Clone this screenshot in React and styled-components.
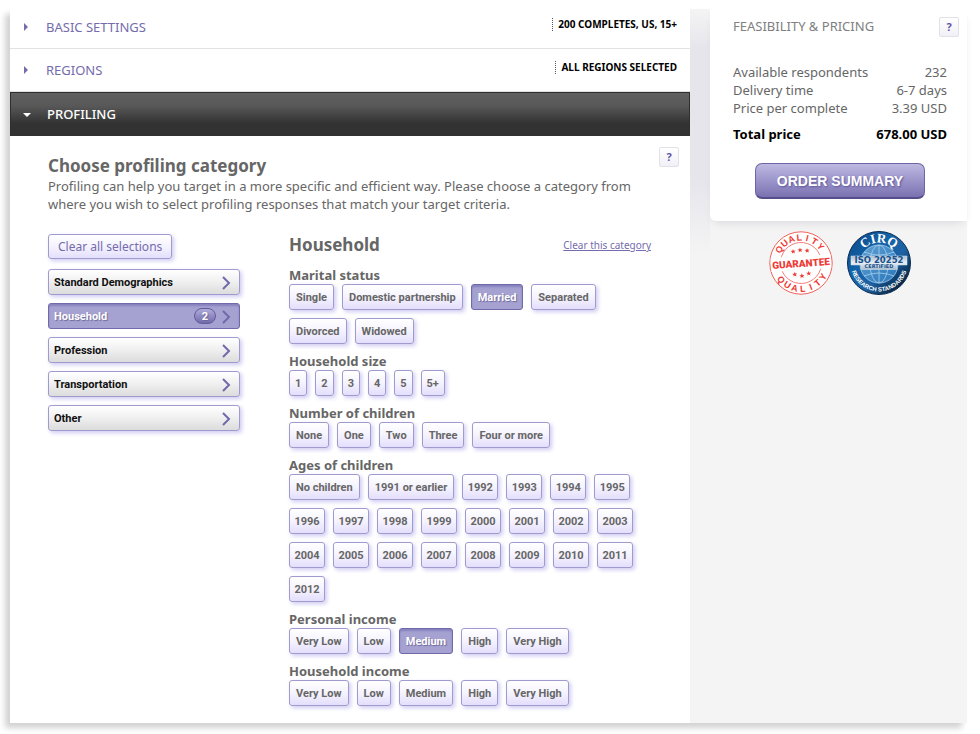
import React, { useState } from 'react';
import styled, { createGlobalStyle, css } from 'styled-components';

const GlobalStyle = createGlobalStyle`
  * { box-sizing: border-box; }
  body {
    margin: 0;
    background: #fff;
    color: #666;
    font: 13px/18px "Noto Sans", "Open Sans", sans-serif;
  }
  h1, h2, h3, p, dl, dd, ul { margin: 0; padding: 0; }
  button { font-family: inherit; cursor: pointer; }
`;

const Page = styled.div`
  display: flex;
  margin: 9px 13px 11px 10px;
  background: #f4f4f4;
  box-shadow: -5px 5px 6px #d2d2d2;
`;

const Main = styled.main`
  flex: 1;
  min-width: 0;
  background: #fff;
`;

const Arrow = styled.svg`
  width: 8px;
  height: 8px;
  margin-right: 14px;
  fill: currentColor;
`;

const SectionButton = styled.button`
  display: flex;
  align-items: center;
  width: 100%;
  height: 43px;
  padding: 0 13px 0 14px;
  border: 0;
  border-bottom: 1px solid #e2e2e2;
  background: #fff;
  color: #746cac;
  font-size: 13px;
  line-height: 18px;
  text-align: left;

  ${(p) => p.$first && css`
    height: 40px;
    padding-bottom: 3px;
  `}

  ${(p) => p.$open && css`
    height: 44px;
    border: 1px solid #2f2f2f;
    border-bottom: 0;
    padding: 0 12px 2px;
    background: linear-gradient(#606060, #585858 30%, #333 70%, #313131);
    color: #fff;
    font-weight: 500;

    ${Arrow} { margin-right: 16px; }
  `}
`;

const SectionName = styled.span`
  flex: 1;
`;

const Summary = styled.span`
  padding-left: 5px;
  margin-bottom: 5px;
  border-left: 1px dotted #555;
  color: #000;
  font-size: 10px;
  font-weight: 700;
  line-height: 13px;
`;

const Content = styled.div`
  padding: 11px 11px 17px 38px;
`;

const Intro = styled.header`
  display: flex;
  align-items: flex-start;
  gap: 8px;
  margin-bottom: 21px;
`;

const IntroText = styled.div`
  flex: 1;
  padding-top: 8px;
`;

const Title = styled.h2`
  color: #666;
  font-size: 17px;
  font-weight: 700;
  line-height: 22px;
`;

const HelpButton = styled.button`
  flex: none;
  width: 20px;
  height: 20px;
  padding: 0;
  border: 1px solid #e2e2e6;
  border-radius: 2px;
  background: linear-gradient(#fff, #f1f0f8);
  color: #6257a8;
  font-size: 11px;
  font-weight: 700;
  line-height: 18px;
`;

const Columns = styled.div`
  display: flex;
  gap: 49px;
  padding-right: 28px;
`;

const Categories = styled.nav`
  flex: none;
  width: 192px;
  display: flex;
  flex-direction: column;
  align-items: flex-start;
  gap: 8px;
`;

const raised = css`
  border: 1px solid #9f9bce;
  border-radius: 3px;
  background: linear-gradient(#fff, #f5f3fe 50%, #e4defc);
  box-shadow: 2px 2px 4px #cfcbf2;
`;

const pressed = css`
  border-color: #7069ab;
  background: #a5a2d1;
  box-shadow: inset 0 2px 2px #8781bd;
  color: #fff;
  text-shadow: 1px 1px 1px #6d689c;
`;

const ClearAll = styled.button`
  ${raised}
  height: 25px;
  margin-bottom: 2px;
  padding: 0 9px;
  color: #746cac;
  font-size: 12px;
  line-height: 18px;
`;

const Category = styled.button`
  ${raised}
  display: flex;
  align-items: center;
  width: 100%;
  height: 26px;
  padding: 2px 8px 0 5px;
  background: linear-gradient(#fff, #f1f1f1 45%, #dcdcdc);
  color: #111;
  font: 700 11px/18px Roboto, sans-serif;
  text-align: left;
  ${(p) => p.$active && pressed}
`;

const CategoryName = styled.span`
  flex: 1;
`;

const Count = styled.span`
  width: 22px;
  height: 16px;
  margin: 0 6px 2px 0;
  border: 1px solid #625b9c;
  border-radius: 8px;
  background: linear-gradient(#b0abda, #736bab);
  line-height: 15px;
  text-align: center;
`;

const Chevron = styled.svg`
  width: 9px;
  height: 14px;
  fill: none;
  stroke: #7269ab;
  stroke-width: 2;
`;

const Details = styled.section`
  flex: 1;
  min-width: 0;
`;

const DetailsHead = styled.div`
  display: flex;
  align-items: center;
  justify-content: space-between;
  margin-bottom: 10px;
`;

const ClearLink = styled.a`
  color: #746cac;
  font-size: 10px;
`;

const Group = styled.div`
  margin-bottom: 8px;
  &:last-child { margin-bottom: 0; }
`;

const GroupName = styled.h3`
  color: #666;
  font-size: 13px;
  font-weight: 700;
  line-height: 18px;
`;

const Chips = styled.div`
  display: flex;
  flex-wrap: wrap;
  gap: 8px;
  padding-right: 10px;
`;

const chipKinds = {
  digit: css`padding: 2px 5px 0;`,
  year: css`
    min-width: 36px;
    padding: 2px 4px 0;
  `,
  word: css`padding: 2px 6px 0;`,
};

const Chip = styled.button`
  ${raised}
  height: 26px;
  color: #666;
  font: 700 11px/18px Roboto, sans-serif;
  ${(p) => chipKinds[p.$kind]}
  ${(p) => p.$on && pressed}
`;

const Side = styled.aside`
  flex: none;
  width: 277px;
  padding-left: 20px;
  background: linear-gradient(#f4f4f4, #e6e5ec 40px, #e6e5ec 170px, #f4f4f4 245px) no-repeat 0 0 / 20px 245px;
`;

const Card = styled.section`
  padding: 8px 8px 22px 23px;
  border-bottom-left-radius: 6px;
  background: #fff;
  box-shadow: 0 5px 10px -4px #d4d4da;
`;

const CardHead = styled.div`
  display: flex;
  justify-content: space-between;
  align-items: center;
  margin-bottom: 26px;
`;

const CardTitle = styled.h2`
  padding-bottom: 2px;
  color: #808080;
  font-size: 13px;
  font-weight: 400;
  line-height: 18px;
`;

const Prices = styled.dl`
  padding-right: 12px;
`;

const Price = styled.div`
  display: flex;
  justify-content: space-between;

  ${(p) => p.$total && css`
    margin-top: 8px;
    color: #000;
    font-weight: 700;
  `}
`;

const OrderButton = styled.button`
  display: block;
  width: 170px;
  height: 36px;
  margin: 20px 0 0 22px;
  padding: 0;
  border: 1px solid #6d65a6;
  border-bottom: 2px solid #554e8c;
  border-radius: 7px;
  background: linear-gradient(#bdb9e0, #9b95cb 50%, #7a72b0);
  color: #fff;
  font: 700 14px/18px "Liberation Sans", Arial, sans-serif;
  text-shadow: 1px 1px 2px #5d5599;
`;

const Badges = styled.div`
  display: flex;
  justify-content: center;
  gap: 14px;
  padding: 10px 0 0 3px;
`;

const Badge = styled.svg`
  width: 64px;
  height: 64px;
`;

const categories = ['Standard Demographics', 'Household', 'Profession', 'Transportation', 'Other'];
const incomes = ['Very Low', 'Low', 'Medium', 'High', 'Very High'];
const years = Array.from({ length: 21 }, (_, i) => String(1992 + i));
const groups = [
  { name: 'Marital status', options: ['Single', 'Domestic partnership', 'Married', 'Separated', 'Divorced', 'Widowed'] },
  { name: 'Household size', options: ['1', '2', '3', '4', '5', '5+'] },
  { name: 'Number of children', options: ['None', 'One', 'Two', 'Three', 'Four or more'] },
  { name: 'Ages of children', options: ['No children', '1991 or earlier', ...years] },
  { name: 'Personal income', options: incomes },
  { name: 'Household income', options: incomes },
];
const prices = [
  ['Available respondents', '232'],
  ['Delivery time', '6-7 days'],
  ['Price per complete', '3.39 USD'],
];

function kindOf(option) {
  if (/^\d{4}$/.test(option)) return 'year';
  if (/^\d\+?$/.test(option)) return 'digit';
  return 'word';
}

function Section({ name, summary, open, first }) {
  return (
    <SectionButton type="button" aria-expanded={!!open} $open={open} $first={first}>
      <Arrow viewBox="0 0 8 8" aria-hidden="true">
        <path d={open ? 'M0 3h8L4 7z' : 'M0 0v8l4-4z'} />
      </Arrow>
      <SectionName>{name}</SectionName>
      {summary && <Summary>{summary}</Summary>}
    </SectionButton>
  );
}

const star = 'M0-2.6L.7-.8 2.6-.8 1.1.4 1.6 2.2 0 1.1-1.6 2.2-1.1.4-2.6-.8-.7-.8z';
const letters = [...'QUALITY'];

function GuaranteeBadge() {
  return (
    <Badge viewBox="0 0 64 64" role="img" aria-label="Quality guarantee">
      <circle cx="32" cy="32" r="31.2" fill="#fff" stroke="#f0625c" />
      <g transform="rotate(-4 32 32)">
        <circle cx="32" cy="32" r="20.5" fill="none" stroke="#f0625c" strokeWidth=".8" />
        <path d="M2 25h60v14H2z" fill="#fff" />
        <g fill="#ee3b35" fontFamily="Liberation Sans, Arial, sans-serif" fontSize="9" fontWeight="700" textAnchor="middle">
          {letters.map((letter, i) => (
            <g key={letter}>
              <text x="32" y="9.5" transform={`rotate(${(i - 3) * 18} 32 32)`}>{letter}</text>
              <text x="32" y="61" transform={`rotate(${(3 - i) * 18} 32 32)`}>{letter}</text>
            </g>
          ))}
          <text x="32" y="36" fontSize="10" fontFamily="Roboto, sans-serif" fontWeight="900">GUARANTEE</text>
          {[[25, 20], [32, 19], [39, 20], [25, 43], [32, 45], [39, 43]].map(([x, y]) => (
            <path key={`${x}-${y}`} d={star} transform={`translate(${x} ${y})`} />
          ))}
        </g>
      </g>
    </Badge>
  );
}

function IsoBadge() {
  return (
    <Badge viewBox="0 0 64 64" role="img" aria-label="CIRQ ISO 20252 certified">
      <defs>
        <linearGradient id="iso-blue" x1="0" y1="0" x2="1" y2="1">
          <stop offset="0" stopColor="#0b4484" />
          <stop offset=".35" stopColor="#1263a8" />
          <stop offset=".6" stopColor="#1d62a4" />
          <stop offset=".85" stopColor="#082848" />
        </linearGradient>
        <linearGradient id="iso-globe" x1="0" y1="0" x2="1" y2="1">
          <stop offset="0" stopColor="#5f9fd2" />
          <stop offset="1" stopColor="#2b78bb" />
        </linearGradient>
        <linearGradient id="iso-band" x1="0" y1="0" x2="0" y2="1">
          <stop offset="0" stopColor="#a9bdcd" />
          <stop offset=".5" stopColor="#e9eff3" />
          <stop offset="1" stopColor="#a9bccb" />
        </linearGradient>
        <path id="iso-top" d="M11.5 32a20.500 20.500 0 0 1 41 0" />
        <path id="iso-bottom" d="M3.5 32a28.500 28.500 0 0 0 57 0" />
      </defs>
      <circle cx="32" cy="32" r="31.5" fill="url(#iso-blue)" stroke="#0a2c52" />
      <circle cx="32" cy="33" r="19" fill="url(#iso-globe)" />
      <g fill="none" stroke="#a8cfec" strokeWidth=".8">
        <circle cx="32" cy="33" r="19" />
        <ellipse cx="32" cy="33" rx="9" ry="19" />
        <path d="M32 14v38M17 21q15 6 30 0M17 45q15-6 30 0" />
      </g>
      <path d="M4 25h56v9H50v4.500H14V34H4z" fill="url(#iso-band)" stroke="#dce8f0" strokeWidth=".5" />
      <g textAnchor="middle">
        <text x="32" y="32.200" fill="#17508e" fontSize="8.5" fontFamily="DejaVu Sans, sans-serif" fontWeight="700">ISO 20252</text>
        <text x="32" y="37.200" fill="#17508e" fontSize="5" fontFamily="DejaVu Sans, sans-serif" fontWeight="700">CERTIFIED</text>
        <text fill="#fff" fontSize="13" fontFamily="Liberation Serif, serif" fontWeight="700">
          <textPath href="#iso-top" startOffset="50%">CIRQ</textPath>
        </text>
        <text fill="#fff" fontSize="6" fontFamily="Liberation Sans, sans-serif" fontWeight="700">
          <textPath href="#iso-bottom" startOffset="50%">RESEARCH STANDARDS</textPath>
        </text>
      </g>
    </Badge>
  );
}

export default function App() {
  const [active, setActive] = useState('Household');
  const [selected, setSelected] = useState({ 'Marital status': 'Married', 'Personal income': 'Medium' });
  const count = Object.values(selected).filter(Boolean).length;
  const toggle = (group, option) =>
    setSelected((s) => ({ ...s, [group]: s[group] === option ? null : option }));

  return (
    <>
      <GlobalStyle />
      <Page>
        <Main>
          <Section name="BASIC SETTINGS" summary="200 COMPLETES, US, 15+" first />
          <Section name="REGIONS" summary="ALL REGIONS SELECTED" />
          <Section name="PROFILING" open />
          <Content>
            <Intro>
              <IntroText>
                <Title>Choose profiling category</Title>
                <p>
                  Profiling can help you target in a more specific and efficient way. Please choose a
                  category from where you wish to select profiling responses that match your target
                  criteria.
                </p>
              </IntroText>
              <HelpButton type="button" aria-label="Help with profiling">?</HelpButton>
            </Intro>
            <Columns>
              <Categories>
                <ClearAll type="button" onClick={() => setSelected({})}>Clear all selections</ClearAll>
                {categories.map((name) => (
                  <Category key={name} type="button" $active={name === active} onClick={() => setActive(name)}>
                    <CategoryName>{name}</CategoryName>
                    {name === 'Household' && count > 0 && <Count>{count}</Count>}
                    <Chevron viewBox="0 0 9 14" aria-hidden="true">
                      <path d="M1 1l6 6-6 6" />
                    </Chevron>
                  </Category>
                ))}
              </Categories>
              <Details>
                <DetailsHead>
                  <Title>Household</Title>
                  <ClearLink href="#clear">Clear this category</ClearLink>
                </DetailsHead>
                {groups.map(({ name, options }) => (
                  <Group key={name} role="group" aria-label={name}>
                    <GroupName>{name}</GroupName>
                    <Chips>
                      {options.map((option) => (
                        <Chip
                          key={option}
                          type="button"
                          aria-pressed={selected[name] === option}
                          $kind={kindOf(option)}
                          $on={selected[name] === option}
                          onClick={() => toggle(name, option)}
                        >
                          {option}
                        </Chip>
                      ))}
                    </Chips>
                  </Group>
                ))}
              </Details>
            </Columns>
          </Content>
        </Main>
        <Side>
          <Card>
            <CardHead>
              <CardTitle>FEASIBILITY &amp; PRICING</CardTitle>
              <HelpButton type="button" aria-label="Help with pricing">?</HelpButton>
            </CardHead>
            <Prices>
              {prices.map(([label, value]) => (
                <Price key={label}>
                  <dt>{label}</dt>
                  <dd>{value}</dd>
                </Price>
              ))}
              <Price $total>
                <dt>Total price</dt>
                <dd>678.00 USD</dd>
              </Price>
            </Prices>
            <OrderButton type="button">ORDER SUMMARY</OrderButton>
          </Card>
          <Badges>
            <GuaranteeBadge />
            <IsoBadge />
          </Badges>
        </Side>
      </Page>
    </>
  );
}
